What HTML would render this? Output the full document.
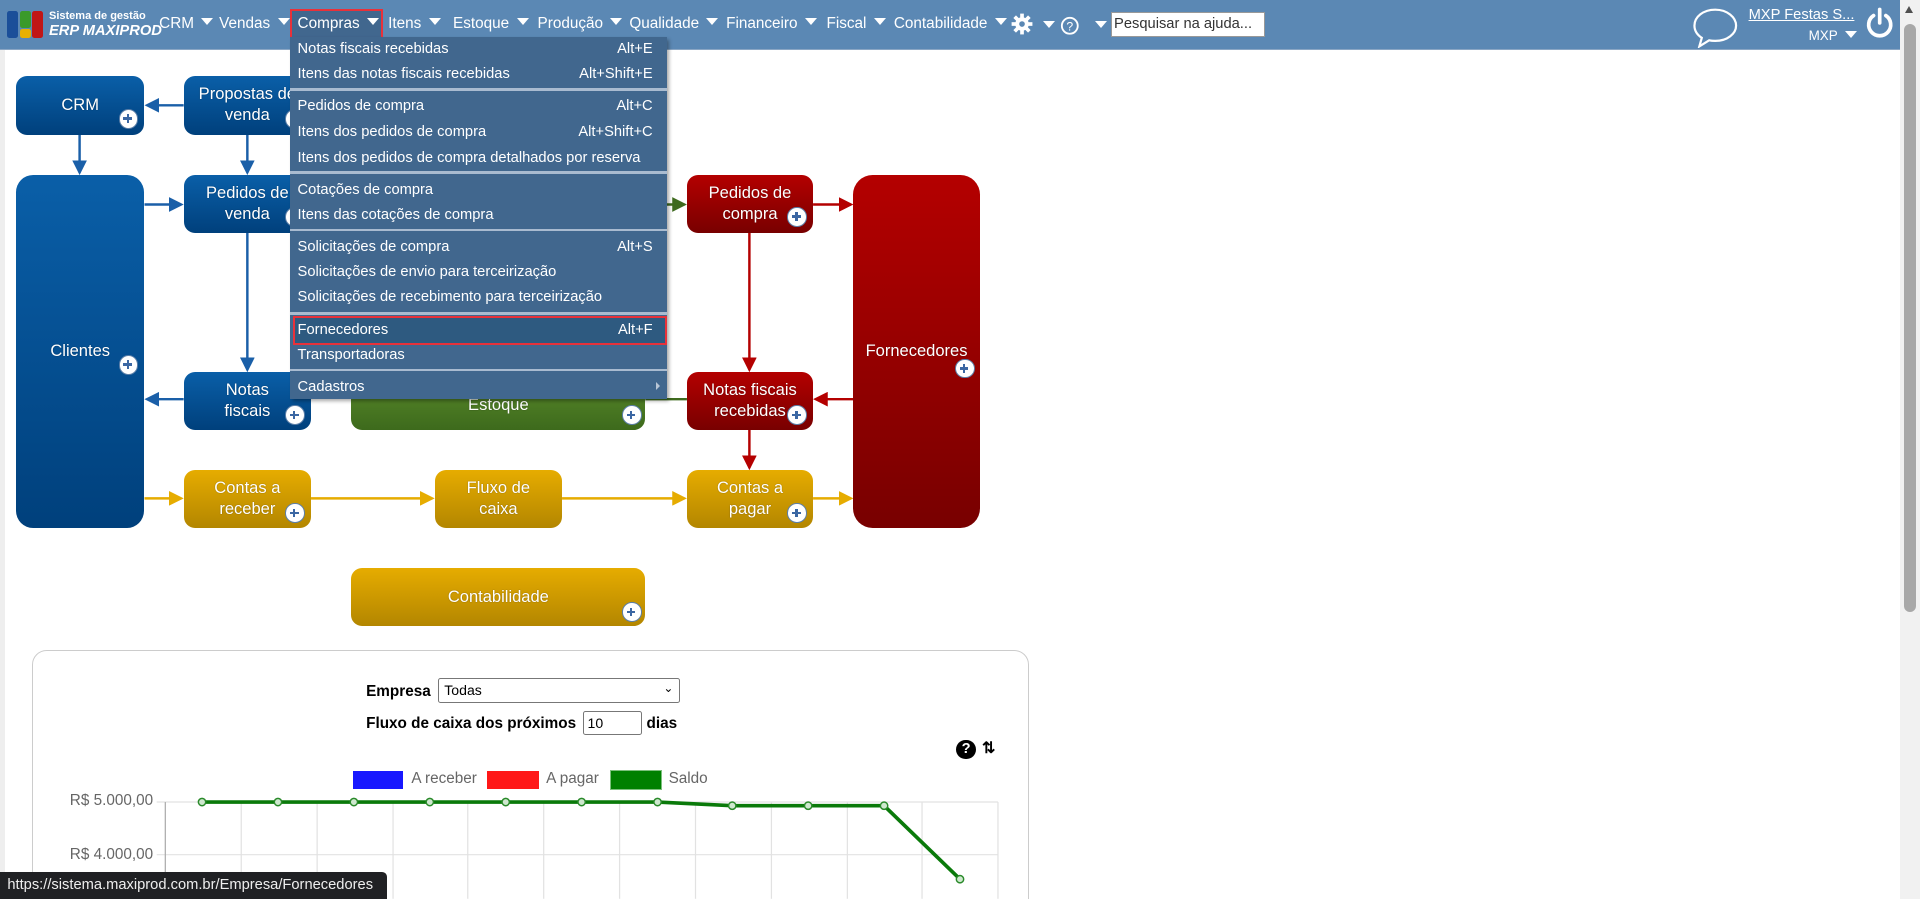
<!DOCTYPE html>
<html><head><meta charset="utf-8">
<style>
*{box-sizing:border-box;margin:0;padding:0}
html,body{width:1920px;height:899px;overflow:hidden;background:#fff}
#w{position:absolute;left:0;top:0;width:1568px;height:734px;zoom:1.22449;font-family:"Liberation Sans",sans-serif;overflow:hidden}
.a{position:absolute}
#hdr{left:0;top:0;width:1552px;height:41px;background:#5b88b4;border-bottom:1px solid #8aa6c4}
.mi{position:absolute;top:12px;color:#fff;font-size:12.5px;white-space:nowrap}
.tri{display:inline-block;width:0;height:0;border-left:5px solid transparent;border-right:5px solid transparent;border-top:6px solid #fff;margin-left:6px;vertical-align:2px}
#menu{left:237px;top:30px;width:308px;height:296px;background:#41678e;box-shadow:2px 2px 3px rgba(0,0,0,.35)}
.r{position:absolute;left:6px;right:12px;color:#fff;font-size:12px;height:20px;line-height:20px}
.r span{float:right}
.sep{position:absolute;left:0;right:0;height:2px;background:#a9bbd0}
.box{position:absolute;color:#fff;font-size:13.5px;text-align:center;display:flex;align-items:center;justify-content:center;line-height:17px;border-radius:9px;text-shadow:0 0 1px rgba(0,0,0,.4)}
.b{background:linear-gradient(#0a5fa8,#00407c)}
.rd{background:linear-gradient(#b40000,#780000)}
.y{background:linear-gradient(#e6ac00,#b38600)}
.g{background:linear-gradient(#5c8c2c,#3d6a1c)}
.p{position:absolute;width:16px;height:16px;border-radius:50%;background:#fff;border:1.5px solid #5c7fa8}
.p:before{content:"";position:absolute;left:3px;top:6px;width:7px;height:2px;background:#3b67a3}
.p:after{content:"";position:absolute;left:5.5px;top:3.5px;width:2px;height:7px;background:#3b67a3}
.lb{position:absolute;font-size:12.5px;font-weight:bold}
</style></head><body><div id="w">
<div id="hdr" class="a"></div>
<div class="a" style="left:6px;top:9px;width:9px;height:22px;background:#1b4f99;border-radius:2px"></div>
<div class="a" style="left:16px;top:9px;width:9px;height:14px;background:#3a9a2a;border-radius:2px"></div>
<div class="a" style="left:16px;top:24px;width:9px;height:7px;background:#e8b000;border-radius:2px"></div>
<div class="a" style="left:26px;top:9px;width:9px;height:22px;background:#c01616;border-radius:2px"></div>
<div class="a" style="left:40px;top:8px;color:#fff;font-size:9px;font-weight:bold">Sistema de gestão</div>
<div class="a" style="left:40px;top:19px;color:#fff;font-size:12px;font-weight:bold;font-style:italic">ERP MAXIPROD</div>
<div class="mi" style="left:130px">CRM<i class="tri"></i></div>
<div class="mi" style="left:179px">Vendas<i class="tri"></i></div>
<div class="a" style="left:237px;top:7px;width:76px;height:25px;background:#41678e;border:2px solid #e8313a"></div>
<div class="mi" style="left:243px">Compras<i class="tri"></i></div>
<div class="mi" style="left:317px">Itens<i class="tri"></i></div>
<div class="mi" style="left:370px">Estoque<i class="tri"></i></div>
<div class="mi" style="left:439px">Produção<i class="tri"></i></div>
<div class="mi" style="left:514px">Qualidade<i class="tri"></i></div>
<div class="mi" style="left:593px">Financeiro<i class="tri"></i></div>
<div class="mi" style="left:675px">Fiscal<i class="tri"></i></div>
<div class="mi" style="left:730px">Contabilidade<i class="tri"></i></div>
<svg class="a" style="left:826px;top:11px" width="18" height="18" viewBox="0 0 18 18"><g fill="#fff"><circle cx="9" cy="9" r="5.5"/><rect x="7.5" y="0.5" width="3" height="17"/><rect x="0.5" y="7.5" width="17" height="3"/><rect x="7.5" y="0.5" width="3" height="17" transform="rotate(45 9 9)"/><rect x="7.5" y="0.5" width="3" height="17" transform="rotate(-45 9 9)"/></g><circle cx="9" cy="9" r="2.3" fill="#5b88b4"/></svg>
<i class="tri a" style="left:846px;top:17px"></i>
<svg class="a" style="left:866px;top:13px" width="16" height="16"><circle cx="8" cy="8" r="6.5" fill="none" stroke="#fff" stroke-width="1.5"/><text x="8" y="12" text-anchor="middle" fill="#fff" font-size="10" font-family="Liberation Sans">?</text></svg>
<i class="tri a" style="left:888px;top:17px"></i>
<div class="a" style="left:907px;top:10px;width:126px;height:20px;background:#fff;border:1px solid #999;font-size:12px;color:#333;padding:2px 2px">Pesquisar na ajuda...</div>
<svg class="a" style="left:1382px;top:5px" width="38" height="34"><path d="M19 3C9 3 2 9 2 16c0 5 3 8 6 10l-2 7 8-5c2 .5 3 .5 5 .5 10 0 17-6 17-12.5S29 3 19 3z" fill="none" stroke="#fff" stroke-width="1.8"/></svg>
<div class="a" style="left:1428px;top:6px;color:#fff;font-size:12px;text-decoration:underline">MXP Festas S...</div>
<div class="a" style="left:1477px;top:23px;color:#fff;font-size:11px">MXP<i class="tri"></i></div>
<svg class="a" style="left:1523px;top:6px" width="24" height="26"><path d="M7 7a9 9 0 1 0 10 0" fill="none" stroke="#fff" stroke-width="3" stroke-linecap="round"/><line x1="12" y1="2" x2="12" y2="13" stroke="#fff" stroke-width="3" stroke-linecap="round"/></svg>
<div class="a" style="left:1552px;top:0;width:16px;height:734px;background:#f1f1f1"></div>
<div class="a" style="left:1555px;top:20px;width:10px;height:480px;background:#a8a8a8;border-radius:5px"></div>
<div class="a" style="left:1556px;top:5px;width:0;height:0;border-left:4px solid transparent;border-right:4px solid transparent;border-bottom:6px solid #505050"></div>
<div class="a" style="left:0;top:41px;width:4px;height:693px;background:#eee"></div>

<svg class="a" style="left:0;top:0" width="1552" height="734">
<defs>
<marker id="mb" markerWidth="6" markerHeight="6" refX="5" refY="3" orient="auto"><path d="M0 0L6 3L0 6z" fill="#1a5fa8"/></marker>
<marker id="mr" markerWidth="6" markerHeight="6" refX="5" refY="3" orient="auto"><path d="M0 0L6 3L0 6z" fill="#b40000"/></marker>
<marker id="my" markerWidth="6" markerHeight="6" refX="5" refY="3" orient="auto"><path d="M0 0L6 3L0 6z" fill="#e6ac00"/></marker>
<marker id="mg" markerWidth="6" markerHeight="6" refX="5" refY="3" orient="auto"><path d="M0 0L6 3L0 6z" fill="#3e6a1e"/></marker>
</defs>
<g stroke-width="2" fill="none">
<path d="M150 86H120" stroke="#1a5fa8" marker-end="url(#mb)"/>
<path d="M65 110V141" stroke="#1a5fa8" marker-end="url(#mb)"/>
<path d="M202 110V141" stroke="#1a5fa8" marker-end="url(#mb)"/>
<path d="M118 167H148" stroke="#1a5fa8" marker-end="url(#mb)"/>
<path d="M202 190V302" stroke="#1a5fa8" marker-end="url(#mb)"/>
<path d="M150 326H120" stroke="#1a5fa8" marker-end="url(#mb)"/>
<path d="M540 167H559" stroke="#3e6a1e" marker-end="url(#mg)"/>
<path d="M527 326H561" stroke="#3e6a1e"/>
<path d="M664 167H695" stroke="#b40000" marker-end="url(#mr)"/>
<path d="M612 190V302" stroke="#b40000" marker-end="url(#mr)"/>
<path d="M697 326H666" stroke="#b40000" marker-end="url(#mr)"/>
<path d="M612 351V382" stroke="#b40000" marker-end="url(#mr)"/>
<path d="M118 407H148" stroke="#e6ac00" marker-end="url(#my)"/>
<path d="M254 407H353" stroke="#e6ac00" marker-end="url(#my)"/>
<path d="M459 407H559" stroke="#e6ac00" marker-end="url(#my)"/>
<path d="M664 407H695" stroke="#e6ac00" marker-end="url(#my)"/>
</g></svg>

<div class="box b" style="left:13px;top:62px;width:105px;height:48px">CRM</div><div class="p" style="left:97px;top:89px"></div>
<div class="box b" style="left:150px;top:62px;width:104px;height:48px">Propostas de<br>venda</div><div class="p" style="left:233px;top:89px"></div>
<div class="box b" style="left:13px;top:143px;width:105px;height:288px;border-radius:14px">Clientes</div><div class="p" style="left:97px;top:290px"></div>
<div class="box b" style="left:150px;top:143px;width:104px;height:47px">Pedidos de<br>venda</div><div class="p" style="left:233px;top:169px"></div>
<div class="box b" style="left:150px;top:304px;width:104px;height:47px">Notas<br>fiscais</div><div class="p" style="left:233px;top:331px"></div>
<div class="box g" style="left:287px;top:304px;width:240px;height:47px;padding-top:8px">Estoque</div><div class="p" style="left:508px;top:331px"></div>
<div class="box rd" style="left:561px;top:143px;width:103px;height:47px">Pedidos de<br>compra</div><div class="p" style="left:643px;top:169px"></div>
<div class="box rd" style="left:561px;top:304px;width:103px;height:47px">Notas fiscais<br>recebidas</div><div class="p" style="left:643px;top:331px"></div>
<div class="box rd" style="left:697px;top:143px;width:103px;height:288px;border-radius:16px">Fornecedores</div><div class="p" style="left:780px;top:293px"></div>
<div class="box y" style="left:150px;top:384px;width:104px;height:47px">Contas a<br>receber</div><div class="p" style="left:233px;top:411px"></div>
<div class="box y" style="left:355px;top:384px;width:104px;height:47px">Fluxo de<br>caixa</div>
<div class="box y" style="left:561px;top:384px;width:103px;height:47px">Contas a<br>pagar</div><div class="p" style="left:643px;top:411px"></div>
<div class="box y" style="left:287px;top:464px;width:240px;height:47px">Contabilidade</div><div class="p" style="left:508px;top:492px"></div>

<div id="menu" class="a">
<div class="r" style="top:0">Notas fiscais recebidas<span>Alt+E</span></div>
<div class="r" style="top:21px">Itens das notas fiscais recebidas<span>Alt+Shift+E</span></div>
<div class="sep" style="top:42px"></div>
<div class="r" style="top:47px">Pedidos de compra<span>Alt+C</span></div>
<div class="r" style="top:68px">Itens dos pedidos de compra<span>Alt+Shift+C</span></div>
<div class="r" style="top:89px">Itens dos pedidos de compra detalhados por reserva</div>
<div class="sep" style="top:110px"></div>
<div class="r" style="top:115px">Cotações de compra</div>
<div class="r" style="top:136px">Itens das cotações de compra</div>
<div class="sep" style="top:157px"></div>
<div class="r" style="top:162px">Solicitações de compra<span>Alt+S</span></div>
<div class="r" style="top:182px">Solicitações de envio para terceirização</div>
<div class="r" style="top:203px">Solicitações de recebimento para terceirização</div>
<div class="sep" style="top:225px"></div>
<div class="a" style="left:2px;top:228px;width:306px;height:24px;background:#2e5a80;border:2px solid #e8313a"></div>
<div class="r" style="top:230px">Fornecedores<span>Alt+F</span></div>
<div class="r" style="top:250px">Transportadoras</div>
<div class="sep" style="top:271px"></div>
<div class="r" style="top:276px">Cadastros<span style="width:0;height:0;border-top:4px solid transparent;border-bottom:4px solid transparent;border-left:4px solid #b8c6d6;margin-top:6px;margin-right:-6px"></span></div>
</div>

<div class="a" style="left:26px;top:531px;width:814px;height:220px;border:1px solid #ccc;border-radius:12px"></div>
<div class="lb" style="left:299px;top:558px">Empresa</div>
<div class="a" style="left:358px;top:554px;width:197px;height:20px;border:1px solid #777;border-radius:2px;font-size:11.5px;padding:2px 4px">Todas<span style="position:absolute;right:4px;top:1px;font-size:10px">&#8964;</span></div>
<div class="lb" style="left:299px;top:584px">Fluxo de caixa dos próximos</div>
<div class="a" style="left:476px;top:581px;width:48px;height:19px;border:1px solid #777;border-radius:2px;font-size:11.5px;padding:2px 3px">10</div>
<div class="lb" style="left:528px;top:584px">dias</div>
<div class="a" style="left:781px;top:604px;width:16px;height:16px;border-radius:50%;background:#000;color:#fff;font-size:12px;font-weight:bold;text-align:center;line-height:16px">?</div>
<div class="a" style="left:802px;top:603px;font-size:13px;font-weight:bold">&#8645;</div>
<div class="a" style="left:288px;top:630px;width:41px;height:14px;background:#1818ff"></div>
<div class="a" style="left:336px;top:629px;font-size:12.5px;color:#666">A receber</div>
<div class="a" style="left:398px;top:630px;width:42px;height:14px;background:#ff1818"></div>
<div class="a" style="left:446px;top:629px;font-size:12.5px;color:#666">A pagar</div>
<div class="a" style="left:498px;top:629px;width:43px;height:16px;background:#008000;border:1px solid #7cc07c"></div>
<div class="a" style="left:546px;top:629px;font-size:12.5px;color:#666">Saldo</div>
<div class="a" style="left:57px;top:647px;font-size:12.5px;color:#666">R$ 5.000,00</div>
<div class="a" style="left:57px;top:691px;font-size:12.5px;color:#666">R$ 4.000,00</div>
<svg class="a" style="left:0;top:0" width="900" height="734">
<g stroke="#e2e2e2" stroke-width="1">
<line x1="128" y1="655" x2="815" y2="655"/><line x1="128" y1="698" x2="815" y2="698"/>
<line x1="197" y1="655" x2="197" y2="734"/><line x1="259" y1="655" x2="259" y2="734"/><line x1="321" y1="655" x2="321" y2="734"/><line x1="382" y1="655" x2="382" y2="734"/><line x1="444" y1="655" x2="444" y2="734"/><line x1="506" y1="655" x2="506" y2="734"/><line x1="568" y1="655" x2="568" y2="734"/><line x1="630" y1="655" x2="630" y2="734"/><line x1="692" y1="655" x2="692" y2="734"/><line x1="753" y1="655" x2="753" y2="734"/><line x1="815" y1="655" x2="815" y2="734"/>
</g>
<line x1="135" y1="655" x2="135" y2="734" stroke="#aaa"/>
<polyline points="165,655 227,655 289,655 351,655 413,655 475,655 537,655 598,658 660,658 722,658 784,718" fill="none" stroke="#0a7a0a" stroke-width="3"/>
<g fill="#cfe8cf" stroke="#2a8a2a" stroke-width="1.2">
<circle cx="165" cy="655" r="3"/><circle cx="227" cy="655" r="3"/><circle cx="289" cy="655" r="3"/><circle cx="351" cy="655" r="3"/><circle cx="413" cy="655" r="3"/><circle cx="475" cy="655" r="3"/><circle cx="537" cy="655" r="3"/><circle cx="598" cy="658" r="3"/><circle cx="660" cy="658" r="3"/><circle cx="722" cy="658" r="3"/><circle cx="784" cy="718" r="3"/>
</g></svg>
<div class="a" style="left:0;top:712px;width:316px;height:22px;background:#202124;border-radius:0 4px 0 0;color:#eee;font-size:12px;padding:4px 0 0 6px;white-space:nowrap">https://sistema.maxiprod.com.br/Empresa/Fornecedores</div>
</div></body></html>
